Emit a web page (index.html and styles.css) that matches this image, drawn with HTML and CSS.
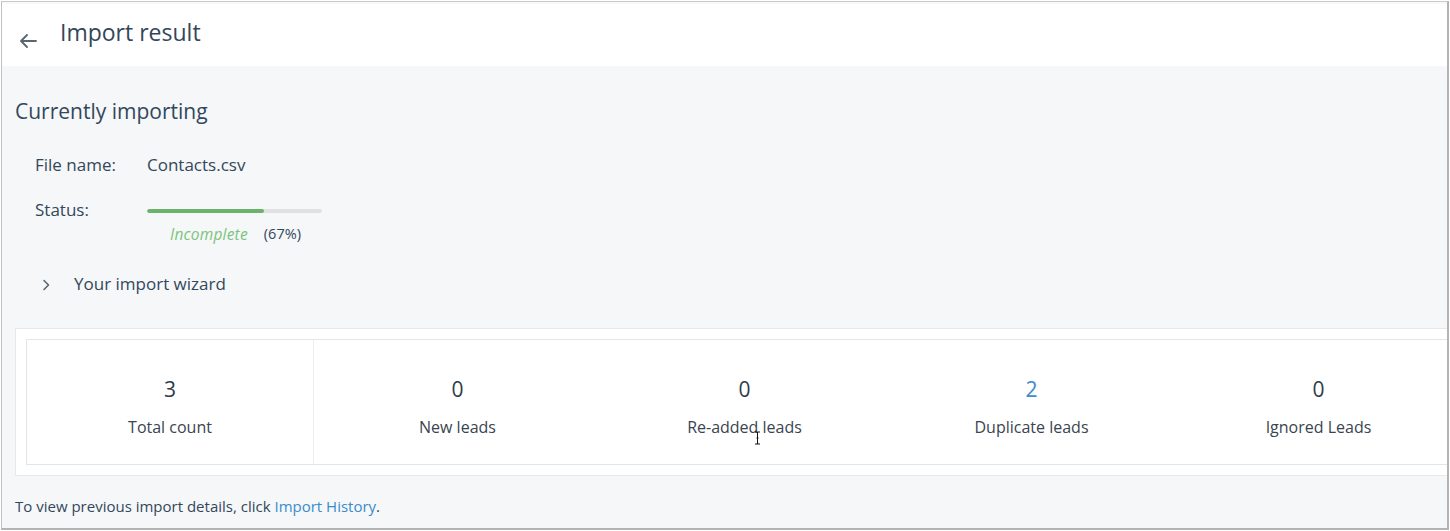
FILE: index.html
```html
<!DOCTYPE html>
<html>
<head>
<meta charset="utf-8">
<link rel="stylesheet" href="styles.css">
</head>
<body>
<div class="frame">
  <header class="header">
    <svg class="back" width="18" height="14" viewBox="0 0 18 14"><path d="M17 7H2M8 1L2 7l6 6" fill="none" stroke="#5b6670" stroke-width="1.8" stroke-linecap="round" stroke-linejoin="round"/></svg>
    <h1 class="title">Import result</h1>
  </header>
  <main class="main">
    <h2 class="section-title">Currently importing</h2>
    <div class="details">
      <div class="row">
        <div class="label">File name:</div>
        <div class="value">Contacts.csv</div>
      </div>
      <div class="row row-status">
        <div class="label">Status:</div>
        <div class="value">
          <div class="bar"><div class="bar-fill" style="width:67%"></div></div>
          <div class="status-line"><span class="incomplete">Incomplete</span><span class="pct">(67%)</span></div>
        </div>
      </div>
      <div class="wizard">
        <svg class="chev" width="8" height="12" viewBox="0 0 8 12"><path d="M2 1.5l4.5 4.5L2 10.5" fill="none" stroke="#5b6670" stroke-width="1.6" stroke-linecap="round" stroke-linejoin="round"/></svg>
        <span>Your import wizard</span>
      </div>
    </div>
    <div class="card">
      <div class="stats">
        <div class="stat stat-first"><div class="num">3</div><div class="cap">Total count</div></div>
        <div class="stat"><div class="num">0</div><div class="cap">New leads</div></div>
        <div class="stat stat-cursor"><div class="num">0</div><div class="cap">Re-added leads</div>
          <svg class="cursor" width="7" height="14" viewBox="0 0 7 14"><path d="M1 1h2.5M3.5 1h2.5M3.5 1v12M1 13h2.5M3.5 13h2.5M2.5 7h2" fill="none" stroke="#111" stroke-width="1"/></svg>
        </div>
        <div class="stat"><div class="num num-blue">2</div><div class="cap">Duplicate leads</div></div>
        <div class="stat"><div class="num">0</div><div class="cap">Ignored Leads</div></div>
      </div>
    </div>
    <p class="footer">To view previous import details, click <a class="link">Import History</a>.</p>
  </main>
</div>
</body>
</html>
```
FILE: styles.css
```css
html, body {
  margin: 0;
  padding: 0;
  background: #ffffff;
}
body {
  padding: 1px 0 0 1px;
  font-family: "Open Sans", "DejaVu Sans", sans-serif;
  color: #33475b;
}
.frame {
  width: 1445px;
  height: 526px;
  border-top: 1px solid #c9c9c9;
  border-left: 1px solid #c2c2c2;
  border-right: 2px solid #b3b3b3;
  border-bottom: 2px solid #b3b3b3;
  overflow: hidden;
  background: #f5f7f9;
}
.header {
  height: 64px;
  background: #ffffff;
  display: flex;
  align-items: center;
  border-top: 2px solid #f7f9fb;
  box-sizing: border-box;
}
.back {
  margin-left: 17px;
  margin-top: 12px;
}
.title {
  margin: -6px 0 0 23px;
  font-size: 23px;
  font-weight: 400;
  line-height: 30px;
  color: #33475b;
}
.main {
  padding: 0 0 0 13px;
}
.section-title {
  margin: 31px 0 0 0;
  font-size: 21px;
  line-height: 28px;
  font-weight: 400;
  color: #33475b;
}
.details {
  padding-left: 20px;
}
.row {
  display: flex;
  font-size: 17px;
  line-height: 22px;
  margin-top: 29px;
}
.row-status {
  margin-top: 23px;
}
.label {
  width: 112px;
  flex: none;
}
.bar {
  width: 175px;
  height: 4px;
  margin-top: 10px;
  border-radius: 2px;
  background: #e1e1e1;
  overflow: hidden;
}
.bar-fill {
  height: 100%;
  background: #6bb36b;
  border-radius: 2px;
}
.status-line {
  margin-top: 11px;
  padding-left: 23px;
  font-size: 15.5px;
  line-height: 20px;
  display: flex;
  gap: 16px;
}
.incomplete {
  font-style: italic;
  color: #7cc47c;
  letter-spacing: 0.2px;
}
.pct {
  color: #33475b;
  font-size: 14.5px;
}
.wizard {
  margin-top: 29px;
  display: flex;
  align-items: center;
  font-size: 17px;
  line-height: 22px;
}
.chev {
  margin-left: 7px;
  margin-right: 24px;
  margin-top: 2px;
}
.card {
  margin-top: 33px;
  width: 1460px;
  padding: 10px;
  background: #ffffff;
  border: 1px solid #e6e9ec;
}
.stats {
  display: grid;
  grid-template-columns: repeat(5, 287px);
  border: 1px solid #e3e6e9;
}
.stat {
  text-align: center;
  padding: 35px 0 26px;
  position: relative;
}
.stat-first {
  border-right: 1px solid #eceef0;
}
.num {
  font-size: 21px;
  line-height: 28px;
  color: #2f3b46;
}
.num-blue {
  color: #3a8ccb;
}
.cap {
  margin-top: 13px;
  font-size: 16px;
  line-height: 22px;
  color: #3a4450;
}
.cursor {
  position: absolute;
  left: 153px;
  top: 91px;
}
.footer {
  margin: 20px 0 0 0;
  font-size: 15px;
  line-height: 20px;
  color: #33475b;
}
.link {
  color: #3a8ccb;
}
```
